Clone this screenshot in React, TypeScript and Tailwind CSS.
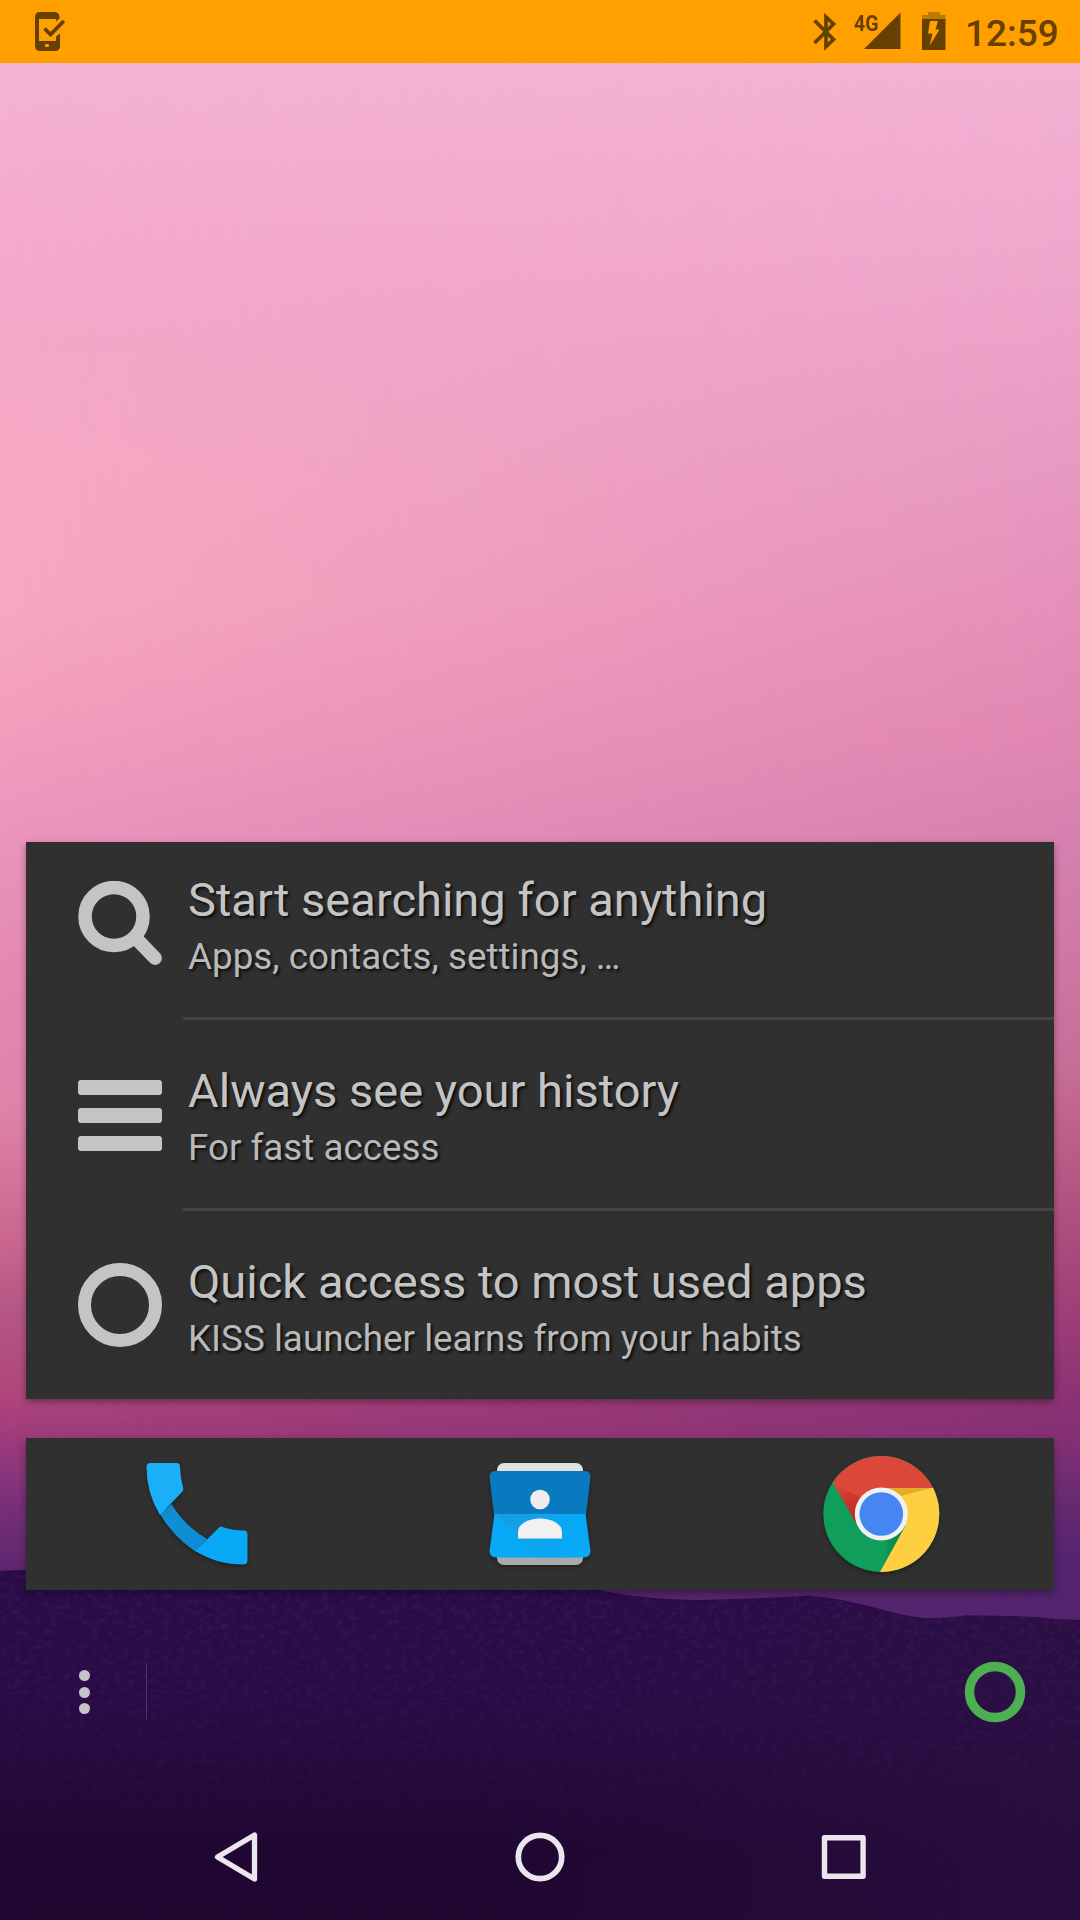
import type { ReactNode } from "react";

const skyLeft =
  "linear-gradient(180deg,#f4b4d4 63px,#f4abcf 200px,#f4a8c8 340px,#f7a9c3 480px,#f7a8c0 600px,#f29ebd 730px,#ea94bd 840px,#e389b2 980px,#df83a9 1110px,#cb6790 1240px,#b55785 1310px,#b0457b 1400px,#97397a 1450px,#78307a 1505px,#5f266f 1570px)";
const skyRight =
  "linear-gradient(180deg,#f3b1d3 63px,#f0a9cd 220px,#eba0c7 360px,#e697bf 500px,#e48db8 630px,#e086b2 740px,#d580af 840px,#cf77a5 950px,#c66d97 1065px,#b75b86 1160px,#a5467a 1270px,#8d3273 1390px,#823075 1440px,#682a72 1500px,#54246f 1560px,#54246f 1620px)";

function Wallpaper() {
  return (
    <div className="absolute inset-0">
      <div className="absolute inset-0" style={{ background: skyLeft }} />
      <div
        className="absolute inset-0 [mask-image:linear-gradient(90deg,transparent,black)]"
        style={{ background: skyRight }}
      />
      <svg className="absolute inset-0" width="1080" height="1920" viewBox="0 0 1080 1920">
        <defs>
          <linearGradient id="soil" x1="0" y1="1570" x2="0" y2="1920" gradientUnits="userSpaceOnUse">
            <stop offset="0" stopColor="#2a0c4a" />
            <stop offset="0.35" stopColor="#290c47" />
            <stop offset="0.6" stopColor="#240a3b" />
            <stop offset="0.8" stopColor="#1f0731" />
            <stop offset="1" stopColor="#200730" />
          </linearGradient>
          <linearGradient id="soilSide" x1="500" y1="0" x2="1080" y2="0" gradientUnits="userSpaceOnUse">
            <stop offset="0" stopColor="#2b0f42" stopOpacity="0" />
            <stop offset="1" stopColor="#2b0f42" stopOpacity="0.75" />
          </linearGradient>
          <filter id="grain" x="0" y="0" width="1" height="1">
            <feTurbulence type="fractalNoise" baseFrequency="0.14 0.2" numOctaves="3" seed="4" />
            <feColorMatrix values="0 0 0 0 0.42  0 0 0 0 0.14  0 0 0 0 0.5  1.6 0 0 0 -0.72" />
            <feComposite in2="SourceGraphic" operator="in" />
          </filter>
          <linearGradient id="fade" x1="0" y1="1570" x2="0" y2="1850" gradientUnits="userSpaceOnUse">
            <stop offset="0" stopColor="#fff" />
            <stop offset="1" stopColor="#fff" stopOpacity="0.15" />
          </linearGradient>
        </defs>
        <path fill="url(#soil)" d="M0 1571L40 1569Q300 1560 600 1590Q640 1599 700 1600Q780 1598 808 1595.500Q840 1598 880 1609T935 1618Q950 1619 965 1615.500Q1030 1615.500 1055 1619L1080 1620V1920H0Z" />
        <path fill="url(#soilSide)" d="M500 1600L700 1600Q780 1598 808 1595.500Q840 1598 880 1609T935 1618L965 1615.500Q1030 1615.500 1055 1619L1080 1620V1920H500Z" />
        <path fill="url(#fade)" filter="url(#grain)" opacity="0.17" d="M0 1571L40 1569Q300 1560 600 1590Q640 1599 700 1600Q780 1598 808 1595.500Q840 1598 880 1609T935 1618Q950 1619 965 1615.500Q1030 1615.500 1055 1619L1080 1620V1920H0Z" />
      </svg>
    </div>
  );
}

function StatusBar() {
  return (
    <header className="flex h-[63px] items-start bg-[#ffa000] text-[#664000]">
      <svg className="mt-3 ml-[34px]" width="32" height="40" viewBox="0 0 32 40" fill="none">
        <path
          fill="currentColor"
          d="M6 0H21Q25.500 .8 25.500 5V6.500L22 9.500V7H5V29H22V27L22 24.500L26 21.500V34Q26 39 21 39H6Q1 39 1 34V5Q1 0 6 0Z"
        />
        <rect x="11" y="32" width="4" height="3" rx="1" fill="#ffa000" />
        <path d="M10.500 16.500L16.500 22.500L29.800 9" stroke="currentColor" strokeWidth="3.800" />
      </svg>
      <svg className="mt-[13px] ml-[746px]" width="25" height="38" viewBox="0 0 25 38" fill="none" stroke="currentColor" strokeWidth="3.700">
        <path d="M2.500 7.500L21.500 26.500L14 33.500V4L21.500 11L2.500 30" />
      </svg>
      <div className="mt-3 ml-[17px] flex">
        <span className="w-[25px] origin-left [transform:scaleX(.87)] text-[22.500px] leading-[22px] font-bold">4G</span>
        <svg className="-ml-[15px]" width="37" height="38" viewBox="0 0 37 38">
          <path fill="currentColor" d="M36.500 .5V37H0Z" />
        </svg>
      </div>
      <svg className="mt-3 ml-[21px]" width="24" height="38" viewBox="0 0 24 38">
        <path fill="#bf7900" d="M6 0H18V3H23.500V7H0V3H6Z" />
        <path fill="currentColor" d="M0 7H23.500V38H0Z" />
        <path fill="#ffa000" d="M8 9H16L13.500 17.500H17.500L7.500 34L10.500 21.500H6Z" />
      </svg>
      <span className="mt-[14px] ml-[19px] text-[37px] leading-10 font-medium">12:59</span>
    </header>
  );
}

function SearchIcon() {
  return (
    <svg width="84" height="84" viewBox="0 0 84 84" fill="none" stroke="#c4c4c4">
      <circle cx="36" cy="35.500" r="29" strokeWidth="13.500" />
      <path d="M61 60.500L77 77" strokeWidth="13.800" strokeLinecap="round" />
    </svg>
  );
}

function ListIcon() {
  return (
    <svg width="84" height="84" viewBox="0 0 84 84" fill="#c4c4c4">
      <rect y="8" width="84" height="15" rx="3" />
      <rect y="36" width="84" height="15" rx="3" />
      <rect y="64" width="84" height="15" rx="3" />
    </svg>
  );
}

function RingIcon() {
  return (
    <svg width="84" height="84" viewBox="0 0 84 84" fill="none" stroke="#c4c4c4">
      <circle cx="42" cy="42" r="35.500" strokeWidth="13" />
    </svg>
  );
}

function Tip({ icon, title, text, pad }: { icon: ReactNode; title: string; text: string; pad: string }) {
  return (
    <div className={`flex pl-[52px] ${pad}`}>
      <div className="mt-[5px] h-[84px] w-[84px]">{icon}</div>
      <div className="ml-[26px] whitespace-nowrap [text-shadow:2px_2px_3px_rgba(0,0,0,.8)]">
        <div className="h-[63px] text-[47.050px] leading-[48px] text-[#c4c4c4]">{title}</div>
        <div className="h-9 text-[36.800px] leading-9 text-[#b9b9b9]">{text}</div>
      </div>
    </div>
  );
}

function PhoneIcon() {
  return (
    <svg width="144" height="144" viewBox="0 0 144 144" className="translate-x-[.5px] [filter:drop-shadow(0_2px_2px_rgba(0,0,0,.35))]">
      <defs>
        <linearGradient id="handle" x1="0" y1="0" x2="1" y2="1">
          <stop offset="0" stopColor="#187cb8" />
          <stop offset=".25" stopColor="#118fd6" />
          <stop offset="1" stopColor="#0c8bd4" />
        </linearGradient>
      </defs>
      <path fill="url(#handle)" d="M34.500 72L46 62Q58 83 81.500 97L70.500 110Q47 94 34.500 72Z" />
      <path fill="#1ab0f7" d="M25 21H51Q54.500 21 54.500 25Q54.600 35 57.700 46Q58.200 48 57 49.500L34.500 73Q21 51 21 25Q21 21 25 21Z" />
      <path fill="#08a9f6" d="M70 109L93.500 85.500Q95 84 97 85Q107 88.500 118 88.500Q122 88.500 122 92.500V118Q122 122.500 118 122.500Q91 122.500 70 109Z" />
    </svg>
  );
}

function ContactsIcon() {
  return (
    <svg width="144" height="144" viewBox="0 0 144 144" className="[filter:drop-shadow(0_2px_2px_rgba(0,0,0,.35))]">
      <defs>
        <linearGradient id="cast" x1="40" y1="80" x2="100" y2="100" gradientUnits="userSpaceOnUse">
          <stop offset="0" stopColor="#149fe4" />
          <stop offset="1" stopColor="#08a9f6" />
        </linearGradient>
      </defs>
      <rect x="29" y="21" width="86" height="30" rx="7" fill="#e1e1e1" />
      <rect x="29" y="93" width="86" height="30" rx="7" fill="#aaa" />
      <path fill="#0a7ac0" d="M27 29H117Q122.500 29.500 122.500 35L118 73H26L21.500 35Q21.500 29.500 27 29Z" />
      <path fill="#08a9f6" d="M26.500 72H117.500L122.500 109Q122 115.500 116 115.500H28Q22 115.500 21.500 109Z" />
      <path fill="url(#cast)" d="M26.500 72L70 115.500H105L110 72Z" />
      <circle cx="72" cy="57.500" r="9.800" fill="#eee" />
      <path fill="#f1f1f1" d="M50 96.500V90Q50 84 57 80Q63.500 76.500 72 76.500Q80.500 76.500 87 80Q94 84 94 90V96.500Z" />
    </svg>
  );
}

function ChromeIcon() {
  return (
    <svg width="144" height="144" viewBox="0 0 144 144" className="-translate-x-[1.700px] [filter:drop-shadow(0_2px_2px_rgba(0,0,0,.35))]">
      <defs>
        <clipPath id="disc">
          <circle cx="72" cy="72" r="58" />
        </clipPath>
        <linearGradient id="redShade" x1="26" y1="42" x2="46" y2="78" gradientUnits="userSpaceOnUse">
          <stop offset="0" stopColor="#da4637" />
          <stop offset="1" stopColor="#b92a20" />
        </linearGradient>
        <linearGradient id="greenShade" x1="70" y1="0" x2="95" y2="0" gradientUnits="userSpaceOnUse">
          <stop offset="0" stopColor="#0f9f5b" />
          <stop offset="1" stopColor="#0a7f45" />
        </linearGradient>
      </defs>
      <g clipPath="url(#disc)">
        <path fill="#0f9f5b" d="M0 0H144V144H0Z" />
        <path fill="#db4839" d="M0 0H144V47H72L48 82L23.500 40.500Z" />
        <path fill="url(#redShade)" d="M24 41L55 58L47 82Z" />
        <path fill="url(#greenShade)" d="M97 86L77 97L75 125L69.500 134Z" />
        <path fill="#ffcf42" d="M72 46H144V144H63L96 84Z" />
        <path fill="#e3ad2b" d="M76 46H122L92 54Z" />
      </g>
      <circle cx="72" cy="72" r="26.500" fill="#f1f1f1" />
      <circle cx="72" cy="72" r="21.800" fill="#4586f3" />
    </svg>
  );
}

export default function App() {
  return (
    <div className="relative h-[1920px] w-[1080px] overflow-hidden bg-[#200730] font-['Roboto',sans-serif]">
      <Wallpaper />
      <div className="relative flex h-full flex-col">
        <StatusBar />
        <main className="flex flex-1 flex-col justify-end px-[26px]">
          <section className="h-[557px] bg-[#303030] shadow-[0_3px_7px_rgba(0,0,0,.35)]">
            <Tip pad="h-[175px] pt-[34px]" icon={<SearchIcon />} title="Start searching for anything" text="Apps, contacts, settings, …" />
            <div className="ml-[157px] h-[3px] bg-[#444]" />
            <Tip pad="h-[188px] pt-[47px]" icon={<ListIcon />} title="Always see your history" text="For fast access" />
            <div className="ml-[157px] h-[3px] bg-[#444]" />
            <Tip pad="h-[188px] pt-[47px]" icon={<RingIcon />} title="Quick access to most used apps" text="KISS launcher learns from your habits" />
          </section>
          <section className="mt-[39px] grid h-[152px] grid-cols-3 place-items-center bg-[#303030] shadow-[0_3px_7px_rgba(0,0,0,.35)]">
            <PhoneIcon />
            <ContactsIcon />
            <ChromeIcon />
          </section>
        </main>
        <div className="mt-[71px] flex h-[62px] items-start">
          <div className="mt-[9px] ml-[79px] flex w-[67px] flex-col gap-[5.500px]">
            <i className="h-[11px] w-[11px] rounded-full bg-[#c4c4c4]" />
            <i className="h-[11px] w-[11px] rounded-full bg-[#c4c4c4]" />
            <i className="h-[11px] w-[11px] rounded-full bg-[#c4c4c4]" />
          </div>
          <div className="mt-[2px] h-[57px] w-px bg-[#4c3563]" />
          <svg className="mr-[54px] ml-auto" width="62" height="62" viewBox="0 0 62 62" fill="none">
            <circle cx="31" cy="31" r="25.500" stroke="#4caf50" strokeWidth="9.500" />
          </svg>
        </div>
        <nav className="flex h-[197px] items-start pt-[107px]">
          <svg className="ml-[213px]" width="48" height="54" viewBox="0 0 48 54" fill="none" stroke="#ebe6ed" strokeWidth="5.300" strokeLinejoin="round">
            <path d="M41.500 5V49L4.500 27Z" />
          </svg>
          <svg className="ml-[252px]" width="54" height="54" viewBox="0 0 54 54" fill="none" stroke="#ebe6ed" strokeWidth="5.700">
            <circle cx="27" cy="27" r="21.700" />
          </svg>
          <svg className="ml-[254px]" width="46" height="54" viewBox="0 0 46 54" fill="none" stroke="#ebe6ed" strokeWidth="5.400" strokeLinejoin="round">
            <rect x="3.500" y="7.700" width="38.600" height="38.600" />
          </svg>
        </nav>
      </div>
    </div>
  );
}
